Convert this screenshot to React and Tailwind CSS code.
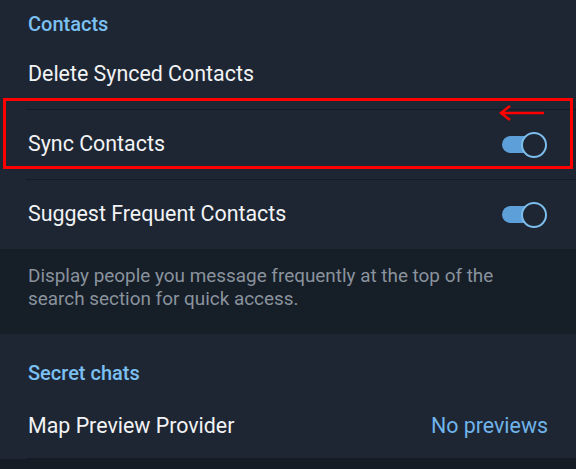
import React from 'react';

const Toggle = () => (
  <div className="relative w-[48px] h-[26px] flex items-center">
    <div className="w-[34px] h-[17px] ml-[2px] rounded-full bg-[#5d9fd9]" />
    <div className="absolute right-[1px] top-[0px] w-[26px] h-[26px] rounded-full border-[2.5px] border-[#7dbdec] bg-[#1e2633]" />
  </div>
);

const Row = ({ label, right, divider = true }) => (
  <div className="pl-[28px]">
    <div className="h-[69px] flex items-center justify-between pr-[28px]">
      <span className="text-[21.4px] text-[#f2f3f5]">{label}</span>
      {right}
    </div>
    {divider && <div className="h-px bg-[#151b24] -ml-[2px]" />}
  </div>
);

export default function App() {
  return (
    <div
      className="relative w-[576px] h-[469px] overflow-hidden bg-[#1e2633] flex flex-col"
      style={{ fontFamily: 'Roboto, "Liberation Sans", sans-serif' }}
    >
      <div className="h-[40px] pl-[28px] pt-[12px] text-[20px] leading-[24px] font-medium text-[#7cc0f2]">
        Contacts
      </div>
      <Row label="Delete Synced Contacts" />
      <Row label="Sync Contacts" right={<Toggle />} />
      <Row label="Suggest Frequent Contacts" right={<Toggle />} divider={false} />

      <div className="bg-[#161e28] px-[28px] pt-[15px] pb-[24px] text-[18.9px] leading-[23px] text-[#8a939d]">
        Display people you message frequently at the top of the
        <br />
        search section for quick access.
      </div>

      <div className="h-[60px] pl-[28px] pt-[27px] text-[20px] leading-[24px] font-medium text-[#7cc0f2]">
        Secret chats
      </div>
      <div className="pl-[28px]">
        <div className="h-[64px] flex items-center justify-between pr-[28px]">
          <span className="text-[21.4px] text-[#f2f3f5]">Map Preview Provider</span>
          <span className="text-[21.4px] text-[#6fb4ea]">No previews</span>
        </div>
        <div className="h-px bg-[#161c25] -ml-[2px]" />
      </div>
      <div className="flex-1 bg-[#151c25]" />

      {/* annotation overlay */}
      <div className="absolute left-[3px] top-[98px] w-[570px] h-[71px] border-[3px] border-[#f00] pointer-events-none" />
      <svg className="absolute left-[498px] top-[105px]" width="48" height="16" viewBox="0 0 48 16">
        <path d="M46 8H4M12 1L3 8l9 7" fill="none" stroke="#f00" strokeWidth="2.5" />
      </svg>
    </div>
  );
}
